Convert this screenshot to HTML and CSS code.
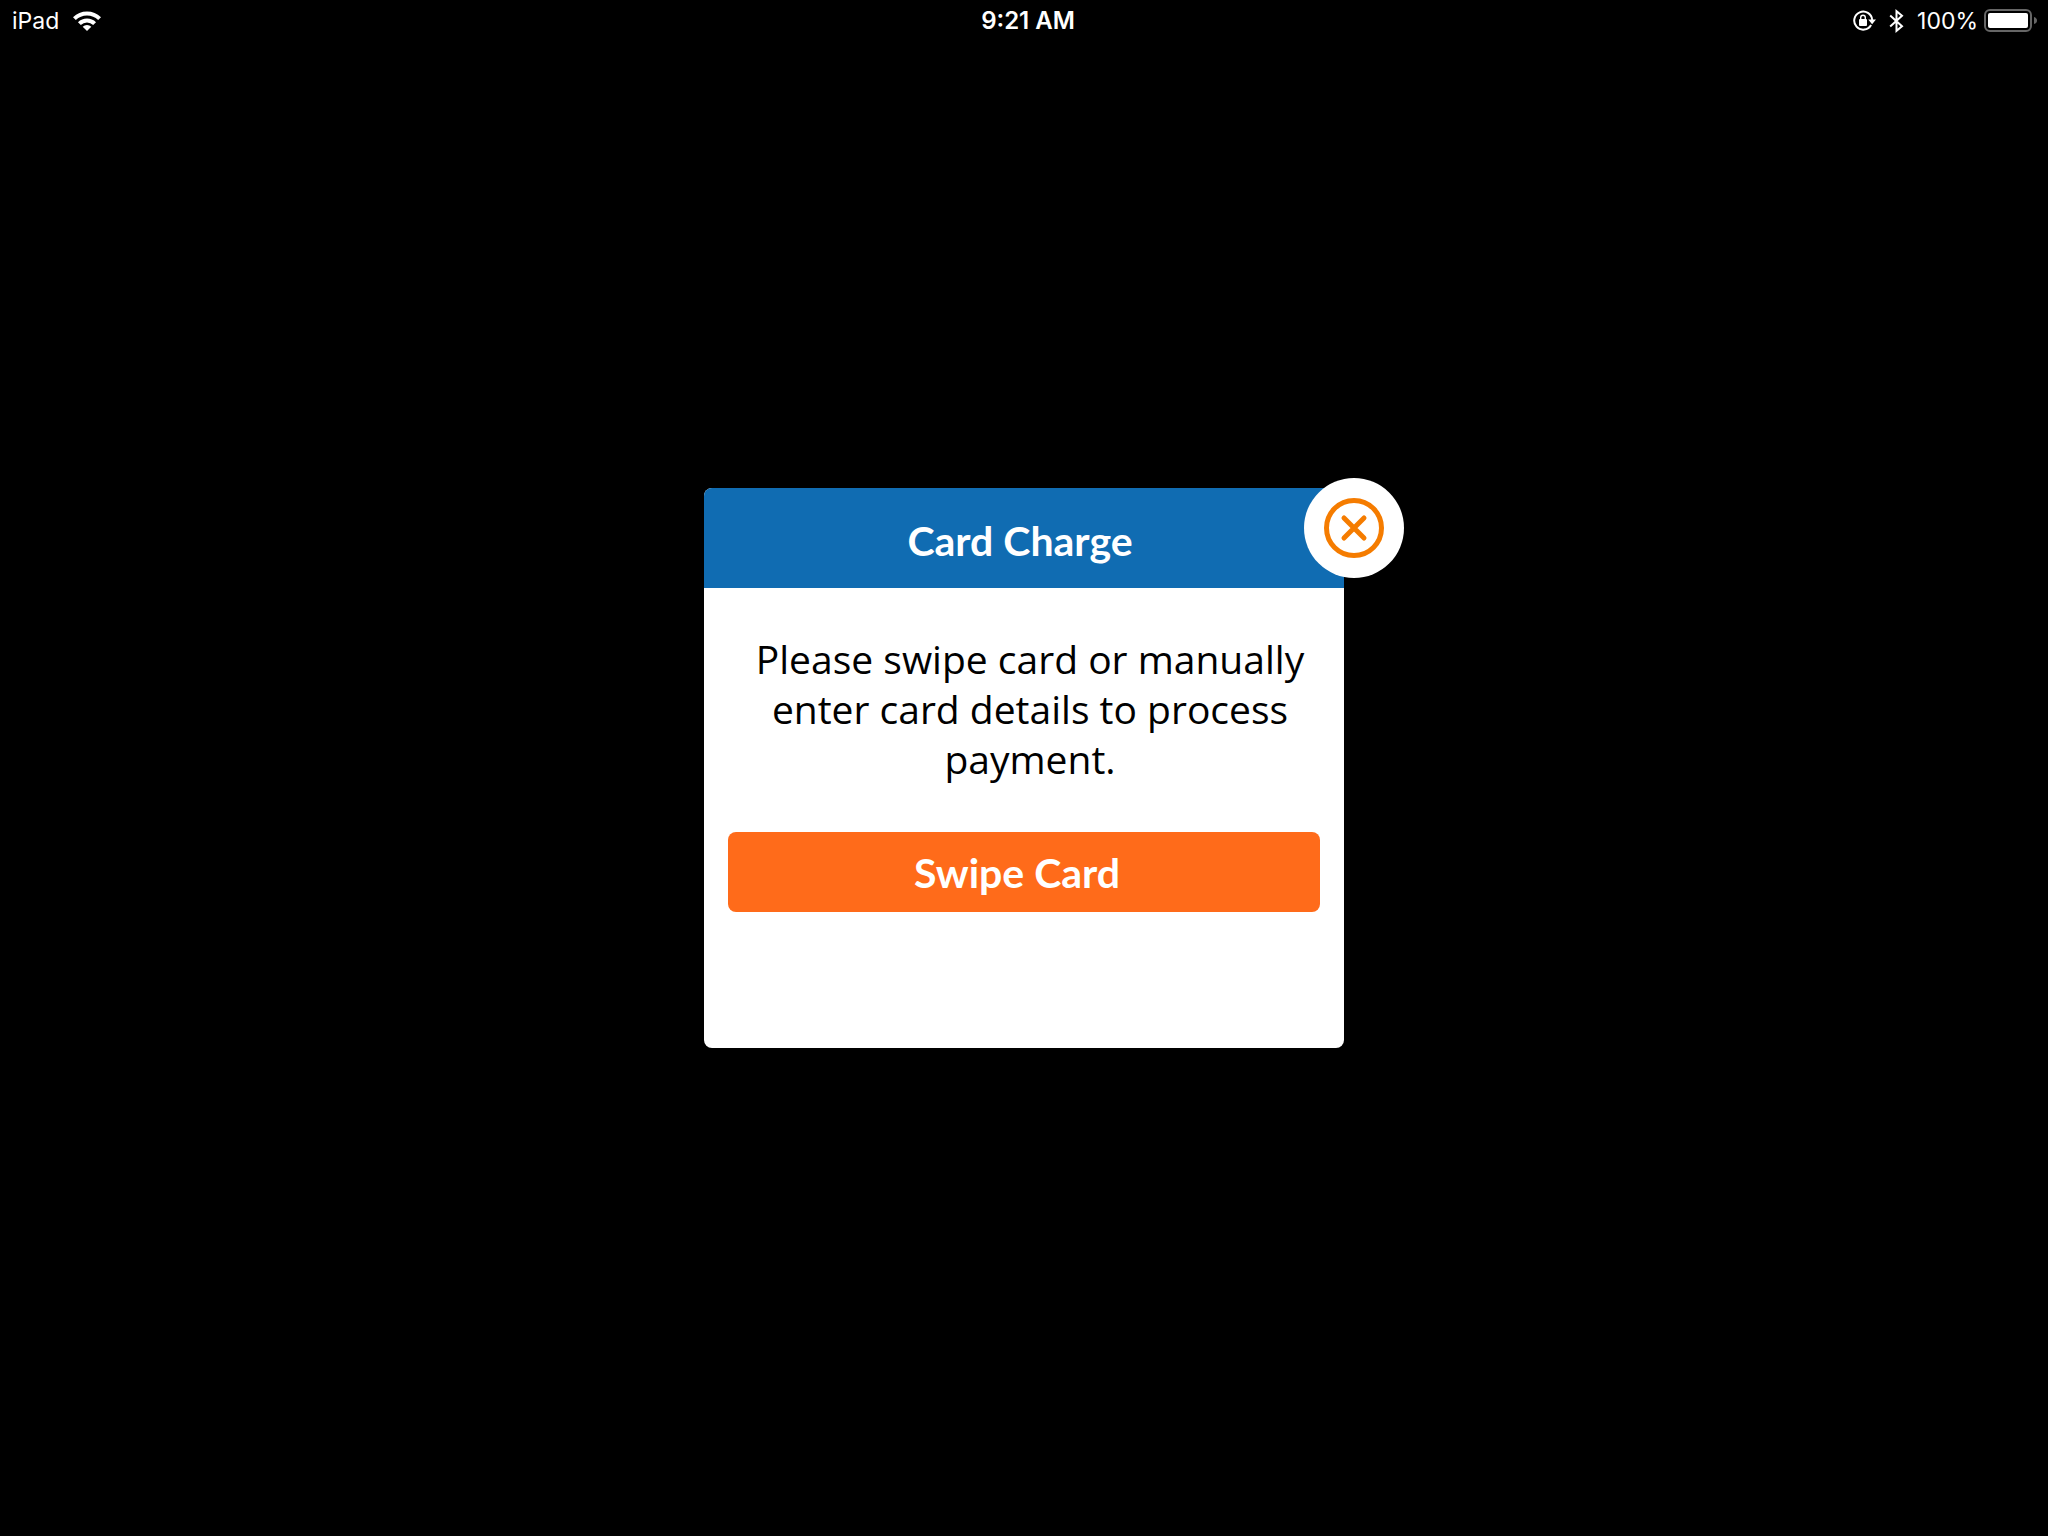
FILE: index.html
```html
<!DOCTYPE html>
<html lang="en">
<head>
<meta charset="utf-8">
<meta name="viewport" content="width=device-width, initial-scale=1">
<title>Card Charge</title>
<link rel="stylesheet" href="styles.css">
</head>
<body>
<header class="status-bar">
  <div class="status-group">
    <span>iPad</span>
    <svg class="wifi" width="28" height="20" viewBox="0 0 28 20" fill="none" stroke="#fff" stroke-width="4" aria-hidden="true">
      <path d="M1.400 7.700A17.800 17.800 0 0 1 26.600 7.700"/>
      <path d="M6.400 12.700A10.700 10.700 0 0 1 21.600 12.700"/>
      <path d="M14 20L9.700 15.700A6.100 6.100 0 0 1 18.300 15.700Z" fill="#fff" stroke="none"/>
    </svg>
  </div>
  <time class="clock">9:21 AM</time>
  <div class="status-group status-end">
    <svg class="rotation-lock" width="24" height="22" viewBox="0 0 24 22" aria-hidden="true">
      <path d="M18.100 15A9 9 0 1 1 19.200 10" fill="none" stroke="#fff" stroke-width="2"/>
      <path d="M15.200 9.500H23L19.100 14.200Z" fill="#fff"/>
      <rect x="6" y="9" width="8" height="7" rx="1" fill="#fff"/>
      <path d="M7.700 10V7.600a2.300 2.300 0 0 1 4.600 0V10" fill="none" stroke="#fff" stroke-width="1.400"/>
    </svg>
    <svg class="bluetooth" width="16" height="24" viewBox="0 0 16 24" fill="none" stroke="#fff" stroke-width="2" aria-hidden="true">
      <path d="M1.200 6.500L13 17.300L7.500 21.800V2.200L13 6.700L1.200 17.500"/>
    </svg>
    <span>100%</span>
    <svg class="battery" width="54" height="24" viewBox="0 0 54 24" aria-hidden="true">
      <rect x="1" y="1" width="46" height="21" rx="5" fill="none" stroke="#666" stroke-width="2"/>
      <rect x="4" y="4" width="40" height="15" rx="2" fill="#fff"/>
      <path d="M50 8Q53 9 53 11.500T50 15Z" fill="#666"/>
    </svg>
  </div>
</header>
<main class="stage">
  <section class="dialog" role="dialog" aria-labelledby="dialog-title">
    <div class="dialog-header"><h1 class="dialog-title" id="dialog-title">Card Charge</h1></div>
    <div class="dialog-body">
      <p class="message">Please swipe card or manually enter card details to process payment.</p>
      <button class="primary" type="button">Swipe Card</button>
    </div>
    <button class="close" type="button" aria-label="Close">
      <svg width="60" height="60" viewBox="0 0 60 60" fill="none" stroke="#f57c00" stroke-width="5" stroke-linecap="round" aria-hidden="true">
        <circle cx="30" cy="30" r="27.500"/>
        <path d="M20 20L40 40M40 20L20 40"/>
      </svg>
    </button>
  </section>
</main>
</body>
</html>
```
FILE: styles.css
```css
* {
  box-sizing: border-box;
}

body {
  display: flex;
  flex-direction: column;
  min-height: 100vh;
  margin: 0;
  background: #000;
  color: #fff;
  font-family: Inter, "Liberation Sans", sans-serif;
}

.status-bar {
  display: grid;
  grid-template-columns: 1fr auto 1fr;
  align-items: center;
  height: 40px;
  padding: 1px 10px 0 12px;
  font-size: 23px;
  line-height: 40px;
}

.status-group {
  display: flex;
  align-items: center;
  gap: 14px;
}

.status-end {
  justify-content: flex-end;
  gap: 12px;
}

.clock {
  padding-left: 6px;
  font-size: 24px;
  font-weight: 600;
}

.battery {
  margin-left: -6px;
}

.stage {
  display: flex;
  flex: 1;
  align-items: center;
  justify-content: center;
  padding-bottom: 40px;
}

.dialog {
  position: relative;
  width: 640px;
  max-width: 90%;
  border-radius: 8px;
  background: #fff;
  color: #000;
  font-family: "Open Sans", "Noto Sans", sans-serif;
  font-size: 39px;
}

.dialog-header {
  padding: 28px 8px 22px 0;
  border-radius: 8px 8px 0 0;
  background: #106cb2;
}

.dialog-title {
  margin: 0;
  color: #fff;
  font-family: Lato, "Noto Sans", sans-serif;
  font-size: 41px;
  font-weight: 700;
  line-height: 50px;
  text-align: center;
}

.dialog-body {
  padding: 46px 24px 136px;
}

.message {
  margin: 0 0 48px;
  padding: 0 12px 0 24px;
  line-height: 50px;
  text-align: center;
}

.primary {
  display: block;
  width: 100%;
  padding: 16px 14px 14px 0;
  border: 0;
  border-radius: 8px;
  background: #ff6b1a;
  color: #fff;
  font: 700 41px/50px Lato, "Noto Sans", sans-serif;
}

.close {
  position: absolute;
  top: -10px;
  right: -60px;
  display: flex;
  align-items: center;
  justify-content: center;
  width: 100px;
  height: 100px;
  padding: 0;
  border: 0;
  border-radius: 50%;
  background: #fff;
}
```
